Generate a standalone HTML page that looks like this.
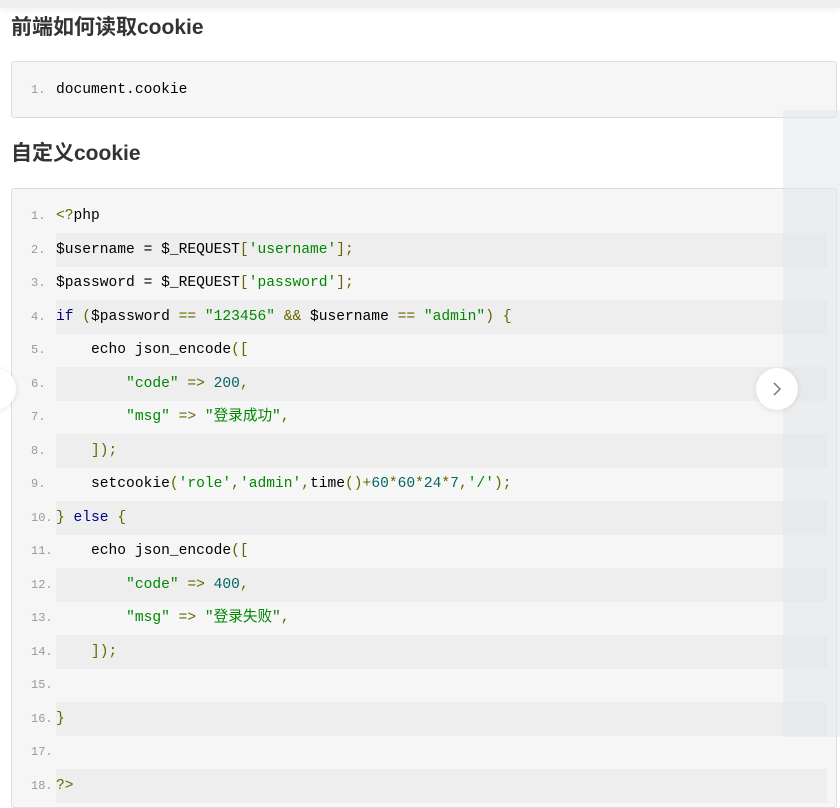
<!DOCTYPE html>
<html><head><meta charset="utf-8"><style>
*{margin:0;padding:0;box-sizing:border-box}
body{width:840px;height:799px;overflow:hidden;background:#fff;position:relative;font-family:"Liberation Sans","Noto Sans CJK SC",sans-serif}
.topbar{position:absolute;left:0;top:0;width:840px;height:8px;background:#eeeff1;box-shadow:0 2px 6px rgba(0,0,0,.06)}
h2{position:absolute;left:11px;font-size:21px;font-weight:bold;color:#333;line-height:28px}
.box{position:absolute;left:11px;width:826px;background:#f6f6f6;border:1px solid #ddd;border-radius:3px;overflow:hidden}
.ln{position:absolute;left:0;height:33.5px;width:826px;font-family:"Liberation Mono","Noto Sans CJK SC",monospace;font-size:14.6px;line-height:35px;color:#000;white-space:pre}
.ln .n{position:absolute;left:19px;color:#999;font-size:12px}
.ln .c{position:absolute;left:44px}
.ln.s .bg{position:absolute;left:44px;right:11px;top:0;bottom:0;background:#eeeeee}
.k{color:#000088}.st{color:#008800}.p{color:#666600}.nm{color:#006666}
.ov{position:absolute;left:783px;top:110px;width:57px;height:627px;background:rgba(225,229,233,.55)}
.arr{position:absolute;left:756px;top:368px;width:42px;height:42px;border-radius:50%;background:#fff;box-shadow:0 1px 6px rgba(0,0,0,.1)}
.arrl{position:absolute;left:-26px;top:368px;width:42px;height:42px;border-radius:50%;background:#fff;box-shadow:0 1px 6px rgba(0,0,0,.1)}
</style></head><body>
<div class="topbar"></div>
<h2 style="top:14px">前端如何读取cookie</h2>
<div class="box" style="top:61px;height:57px">
<div class="ln" style="top:11px"><span class="n">1.</span><span class="c">document.cookie</span></div>
</div>
<h2 style="top:140px">自定义cookie</h2>
<div class="box" style="top:188px;height:620px">
<div class="ln" style="top:10px"><span class="n">1.</span><span class="c"><span class="p">&lt;?</span>php</span></div>
<div class="ln s" style="top:44px"><div class="bg"></div><span class="n">2.</span><span class="c">$username = $_REQUEST<span class="p">[</span><span class="st">'username'</span><span class="p">];</span></span></div>
<div class="ln" style="top:77px"><span class="n">3.</span><span class="c">$password = $_REQUEST<span class="p">[</span><span class="st">'password'</span><span class="p">];</span></span></div>
<div class="ln s" style="top:111px"><div class="bg"></div><span class="n">4.</span><span class="c"><span class="k">if</span> <span class="p">(</span>$password <span class="p">==</span> <span class="st">"123456"</span> <span class="p">&amp;&amp;</span> $username <span class="p">==</span> <span class="st">"admin"</span><span class="p">)</span> <span class="p">{</span></span></div>
<div class="ln" style="top:144px"><span class="n">5.</span><span class="c">    echo json_encode<span class="p">([</span></span></div>
<div class="ln s" style="top:178px"><div class="bg"></div><span class="n">6.</span><span class="c">        <span class="st">"code"</span> <span class="p">=&gt;</span> <span class="nm">200</span><span class="p">,</span></span></div>
<div class="ln" style="top:211px"><span class="n">7.</span><span class="c">        <span class="st">"msg"</span> <span class="p">=&gt;</span> <span class="st">"登录成功"</span><span class="p">,</span></span></div>
<div class="ln s" style="top:245px"><div class="bg"></div><span class="n">8.</span><span class="c">    <span class="p">]);</span></span></div>
<div class="ln" style="top:278px"><span class="n">9.</span><span class="c">    setcookie<span class="p">(</span><span class="st">'role'</span><span class="p">,</span><span class="st">'admin'</span><span class="p">,</span>time<span class="p">()+</span><span class="nm">60</span><span class="p">*</span><span class="nm">60</span><span class="p">*</span><span class="nm">24</span><span class="p">*</span><span class="nm">7</span><span class="p">,</span><span class="st">'/'</span><span class="p">);</span></span></div>
<div class="ln s" style="top:312px"><div class="bg"></div><span class="n">10.</span><span class="c"><span class="p">}</span> <span class="k">else</span> <span class="p">{</span></span></div>
<div class="ln" style="top:345px"><span class="n">11.</span><span class="c">    echo json_encode<span class="p">([</span></span></div>
<div class="ln s" style="top:379px"><div class="bg"></div><span class="n">12.</span><span class="c">        <span class="st">"code"</span> <span class="p">=&gt;</span> <span class="nm">400</span><span class="p">,</span></span></div>
<div class="ln" style="top:412px"><span class="n">13.</span><span class="c">        <span class="st">"msg"</span> <span class="p">=&gt;</span> <span class="st">"登录失败"</span><span class="p">,</span></span></div>
<div class="ln s" style="top:446px"><div class="bg"></div><span class="n">14.</span><span class="c">    <span class="p">]);</span></span></div>
<div class="ln" style="top:479px"><span class="n">15.</span><span class="c"></span></div>
<div class="ln s" style="top:513px"><div class="bg"></div><span class="n">16.</span><span class="c"><span class="p">}</span></span></div>
<div class="ln" style="top:546px"><span class="n">17.</span><span class="c"></span></div>
<div class="ln s" style="top:580px"><div class="bg"></div><span class="n">18.</span><span class="c"><span class="p">?&gt;</span></span></div>
</div>
<div class="ov"></div>
<div class="arrl"></div>
<div class="arr"><svg width="42" height="42" viewBox="0 0 42 42"><path d="M18 15 L24 21 L18 27" fill="none" stroke="#777" stroke-width="1.5"/></svg></div>
</body></html>
